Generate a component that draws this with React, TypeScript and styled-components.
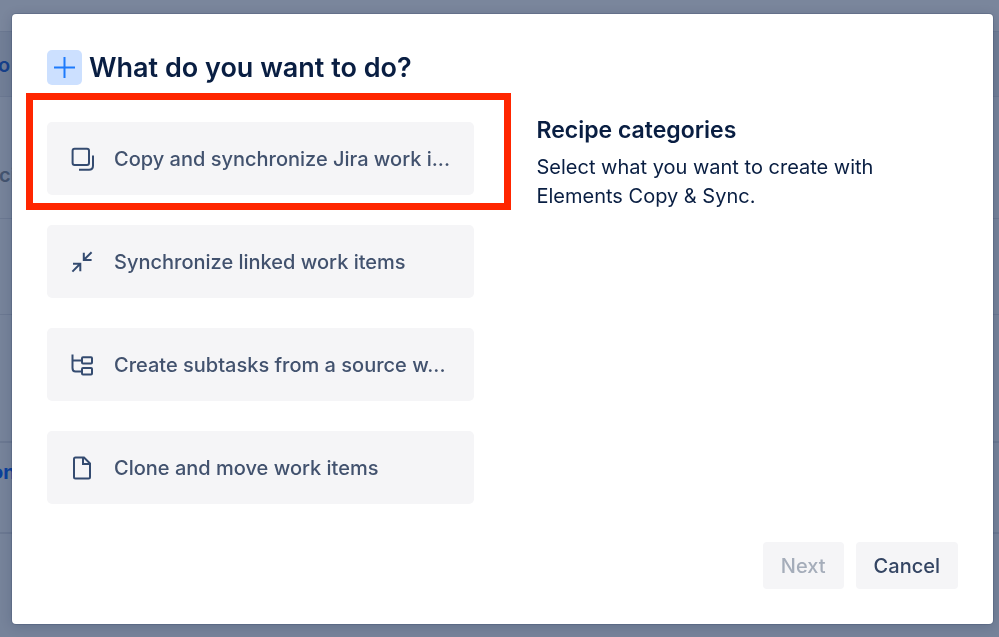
import React from "react";
import styled, { createGlobalStyle } from "styled-components";

const GlobalStyle = createGlobalStyle`
  * { box-sizing: border-box; }
  body {
    margin: 0;
    background: #76839a;
    color: #091e42;
    font-family: Inter, "Liberation Sans", sans-serif;
  }
  h1, h2, p, ul { margin: 0; padding: 0; }
  button { font-family: inherit; }
`;

const Page = styled.div`
  min-height: 100vh;
  overflow: hidden;
`;

const Backdrop = styled.div`
  position: fixed;
  inset: 0;
  overflow: hidden;
`;

const BackdropRow = styled.div<{ $height: number; $tone?: string; $line?: number; $top?: number }>`
  height: ${(p) => p.$height}px;
  padding-top: ${(p) => p.$top ?? 0}px;
  background: ${(p) => p.$tone ?? "#76839a"};
  border-bottom: ${(p) => p.$line ?? 1}px solid #6b7891;
`;

const BackdropText = styled.span<{ $color: string; $bold?: boolean; $cut: number }>`
  display: block;
  margin-left: -${(p) => p.$cut}px;
  color: ${(p) => p.$color};
  font-size: 20px;
  line-height: 24px;
  font-weight: ${(p) => (p.$bold ? 700 : 600)};
`;

const Overlay = styled.div`
  position: relative;
  display: flex;
  min-height: 100vh;
  padding: 14px 6px 13px 12px;
`;

const Dialog = styled.section`
  display: flex;
  flex-direction: column;
  flex: 1;
  padding: 35px;
  background: #ffffff;
  border-radius: 4px;
  box-shadow: 0 0 0 1px rgba(9, 30, 66, 0.14), 0 2px 12px rgba(9, 30, 66, 0.18);
`;

const Header = styled.header`
  display: flex;
  align-items: center;
  gap: 7px;
  height: 37px;
`;

const HeaderIcon = styled.span`
  display: flex;
  width: 35px;
  height: 35px;
  border-radius: 5px;
  background: #cce0ff;
`;

const Title = styled.h1`
  font-size: 27px;
  line-height: 36px;
  font-weight: 600;
  white-space: nowrap;
`;

const Columns = styled.div`
  display: grid;
  grid-template-columns: minmax(0, 428fr) minmax(0, 422fr);
  column-gap: 62px;
  margin-top: 36px;
`;

const RecipeList = styled.ul`
  display: flex;
  flex-direction: column;
  gap: 30px;
  list-style: none;
`;

const RecipeItem = styled.li`
  position: relative;
`;

const Recipe = styled.button`
  display: flex;
  align-items: center;
  gap: 20px;
  width: 100%;
  height: 73px;
  padding: 0 23px;
  border: 0;
  border-radius: 5px;
  background: #f5f5f7;
  color: #42526e;
  font-size: 20px;
  line-height: 28px;
  font-weight: 500;
  text-align: left;
  white-space: nowrap;
  cursor: pointer;

  svg { flex: none; }
`;

const Highlight = styled.span`
  position: absolute;
  inset: -29px -37px -15px -21px;
  border: 7px solid #ff2600;
  pointer-events: none;
`;

const Details = styled.div`
  margin-top: -8px;
`;

const DetailsTitle = styled.h2`
  font-size: 23px;
  line-height: 32px;
  font-weight: 600;
`;

const DetailsText = styled.p`
  margin-top: 7px;
  font-size: 20px;
  line-height: 29px;
`;

const Footer = styled.footer`
  display: flex;
  justify-content: flex-end;
  gap: 12px;
  margin-top: auto;
`;

const FooterButton = styled.button`
  height: 47px;
  padding: 0 18px;
  border: 0;
  border-radius: 4px;
  background: #f5f5f7;
  color: #344563;
  font-size: 20px;
  line-height: 28px;
  font-weight: 500;
  cursor: pointer;

  &:disabled {
    color: #a5adba;
    cursor: not-allowed;
  }
`;

const Glyph = ({ children }: { children: React.ReactNode }) => (
  <svg width="24" height="24" viewBox="0 0 24 24" fill="none" stroke="#344b70" strokeWidth="2" aria-hidden="true">
    {children}
  </svg>
);

const CopyIcon = () => (
  <Glyph>
    <rect x="2.6" y="1.8" width="16.4" height="16.2" rx="2" />
    <path d="M23 8.5v10.2q0 4-4 4H9" />
  </Glyph>
);

const SyncIcon = () => (
  <Glyph>
    <path d="M21.6 2.2 14 9.8M13.8 2.8V10h7.8M2.4 21.6l7.8-7.8M3 13.7h7.3v7.6" />
  </Glyph>
);

const SubtaskIcon = () => (
  <Glyph>
    <path d="M2.500 1.500v13.500q0 3.500 3 3.500h6M2.500 7.500h9" />
    <rect x="12" y="4.2" width="10" height="6.4" rx="1" />
    <rect x="12" y="15" width="10" height="6.4" rx="1" />
  </Glyph>
);

const PageIcon = () => (
  <Glyph>
    <path d="M5.500 1.500H14l6 6V21q0 1.500-1.500 1.500h-13q-1.500 0-1.500-1.500V3q0-1.500 1.500-1.500ZM13 1.500V8h7" />
  </Glyph>
);

const recipes = [
  { label: "Copy and synchronize Jira work i...", Icon: CopyIcon, highlighted: true },
  { label: "Synchronize linked work items", Icon: SyncIcon },
  { label: "Create subtasks from a source w...", Icon: SubtaskIcon },
  { label: "Clone and move work items", Icon: PageIcon },
];

export default function App() {
  return (
    <Page>
      <GlobalStyle />
      <Backdrop aria-hidden="true">
        <BackdropRow $height={32} $tone="#7a869c" />
        <BackdropRow $height={65} $tone="#717e96" $top={21}>
          <BackdropText $color="#17408a" $cut={2}>o</BackdropText>
        </BackdropRow>
        <BackdropRow $height={122} $top={66}>
          <BackdropText $color="#44546f" $cut={1}>ci</BackdropText>
        </BackdropRow>
        <BackdropRow $height={96} />
        <BackdropRow $height={128} $line={2} />
        <BackdropRow $height={91} $line={2} $top={17}>
          <BackdropText $color="#0c409a" $cut={9} $bold>on</BackdropText>
        </BackdropRow>
      </Backdrop>
      <Overlay>
        <Dialog role="dialog" aria-modal="true" aria-labelledby="dialog-title">
          <Header>
            <HeaderIcon>
              <svg width="35" height="35" viewBox="0 0 35 35" fill="none" stroke="#1d7afc" strokeWidth="2" aria-hidden="true">
                <path d="M17.500 7v21M7 17.500h21" />
              </svg>
            </HeaderIcon>
            <Title id="dialog-title">What do you want to do?</Title>
          </Header>
          <Columns>
            <RecipeList>
              {recipes.map(({ label, Icon, highlighted }) => (
                <RecipeItem key={label}>
                  <Recipe type="button">
                    <Icon />
                    {label}
                  </Recipe>
                  {highlighted && <Highlight />}
                </RecipeItem>
              ))}
            </RecipeList>
            <Details>
              <DetailsTitle>Recipe categories</DetailsTitle>
              <DetailsText>Select what you want to create with Elements Copy &amp; Sync.</DetailsText>
            </Details>
          </Columns>
          <Footer>
            <FooterButton type="button" disabled>Next</FooterButton>
            <FooterButton type="button">Cancel</FooterButton>
          </Footer>
        </Dialog>
      </Overlay>
    </Page>
  );
}
